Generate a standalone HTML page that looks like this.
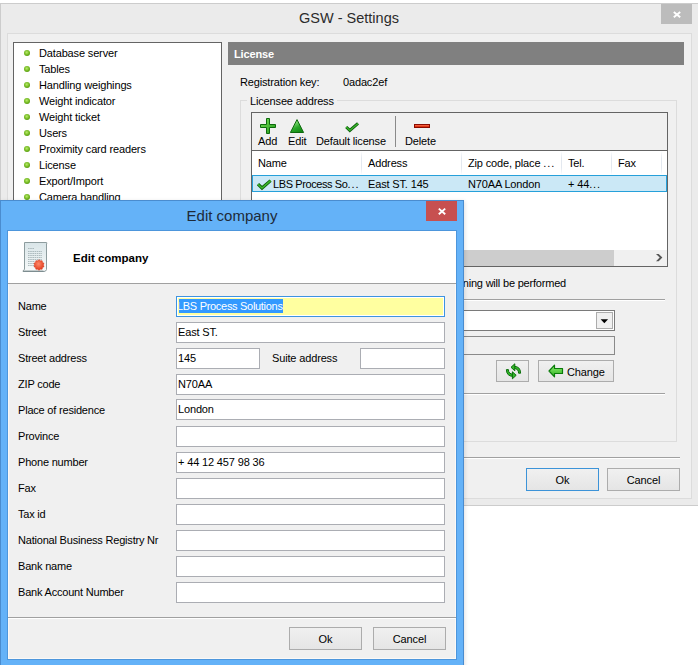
<!DOCTYPE html>
<html><head><meta charset="utf-8">
<style>
*{box-sizing:border-box;margin:0;padding:0}
html,body{width:698px;height:665px;overflow:hidden;background:#fff}
body{position:relative;font-family:"Liberation Sans",sans-serif;font-size:11px;color:#000}
.a{position:absolute}
.t{position:absolute;white-space:nowrap;line-height:11px;letter-spacing:-0.15px}
.btn{position:absolute;border:1px solid #acacac;background:linear-gradient(#f0f0f0,#e5e5e5)}
.fld{position:absolute;border:1px solid #abadb3;background:#fff}
svg{position:absolute;overflow:visible}
</style></head><body>

<div class="a" style="left:0px;top:3px;width:710px;height:503px;background:#ebebeb;border:1px solid #cccccc;border-right:none"></div>
<div class="t" style="left:0;width:698px;text-align:center;top:11px;font-size:14.5px;line-height:15px;letter-spacing:0;color:#2b2b2b">GSW - Settings</div>
<div class="a" style="left:661px;top:4px;width:31px;height:20px;background:#bcbcbc"></div>
<svg style="left:661px;top:4px" width="31" height="20"><path d="M12.8 7.9 L19.2 13.3 M19.2 7.9 L12.8 13.3" stroke="#fff" stroke-width="1.9" fill="none"/></svg>
<div class="a" style="left:7px;top:33px;width:685px;height:466px;background:#f0f0f0;border:1px solid #dcdcdc"></div>
<div class="a" style="left:13px;top:42px;width:209px;height:200px;background:#fff;border:1px solid #646464"></div>
<div class="a" style="left:24px;top:50px;width:6px;height:6px;border-radius:50%;background:radial-gradient(circle at 45% 40%,#b8ec6a,#6cb21a 55%,#3f7f0a)"></div>
<div class="t" style="left:39px;top:48px;">Database server</div>
<div class="a" style="left:24px;top:66px;width:6px;height:6px;border-radius:50%;background:radial-gradient(circle at 45% 40%,#b8ec6a,#6cb21a 55%,#3f7f0a)"></div>
<div class="t" style="left:39px;top:64px;">Tables</div>
<div class="a" style="left:24px;top:82px;width:6px;height:6px;border-radius:50%;background:radial-gradient(circle at 45% 40%,#b8ec6a,#6cb21a 55%,#3f7f0a)"></div>
<div class="t" style="left:39px;top:80px;">Handling weighings</div>
<div class="a" style="left:24px;top:98px;width:6px;height:6px;border-radius:50%;background:radial-gradient(circle at 45% 40%,#b8ec6a,#6cb21a 55%,#3f7f0a)"></div>
<div class="t" style="left:39px;top:96px;">Weight indicator</div>
<div class="a" style="left:24px;top:114px;width:6px;height:6px;border-radius:50%;background:radial-gradient(circle at 45% 40%,#b8ec6a,#6cb21a 55%,#3f7f0a)"></div>
<div class="t" style="left:39px;top:112px;">Weight ticket</div>
<div class="a" style="left:24px;top:130px;width:6px;height:6px;border-radius:50%;background:radial-gradient(circle at 45% 40%,#b8ec6a,#6cb21a 55%,#3f7f0a)"></div>
<div class="t" style="left:39px;top:128px;">Users</div>
<div class="a" style="left:24px;top:146px;width:6px;height:6px;border-radius:50%;background:radial-gradient(circle at 45% 40%,#b8ec6a,#6cb21a 55%,#3f7f0a)"></div>
<div class="t" style="left:39px;top:144px;">Proximity card readers</div>
<div class="a" style="left:24px;top:162px;width:6px;height:6px;border-radius:50%;background:radial-gradient(circle at 45% 40%,#b8ec6a,#6cb21a 55%,#3f7f0a)"></div>
<div class="t" style="left:39px;top:160px;">License</div>
<div class="a" style="left:24px;top:178px;width:6px;height:6px;border-radius:50%;background:radial-gradient(circle at 45% 40%,#b8ec6a,#6cb21a 55%,#3f7f0a)"></div>
<div class="t" style="left:39px;top:176px;">Export/Import</div>
<div class="a" style="left:24px;top:194px;width:6px;height:6px;border-radius:50%;background:radial-gradient(circle at 45% 40%,#b8ec6a,#6cb21a 55%,#3f7f0a)"></div>
<div class="t" style="left:39px;top:192px;">Camera handling</div>
<div class="a" style="left:228px;top:42px;width:456px;height:23px;background:#808080"></div>
<div class="t" style="left:234px;top:49px;font-weight:bold;color:#fff;">License</div>
<div class="t" style="left:240px;top:77px;">Registration key:</div>
<div class="t" style="left:343px;top:77px;">0adac2ef</div>
<div class="a" style="left:240px;top:100px;width:437px;height:342px;border:1px solid #dcdcdc"></div>
<div class="t" style="left:247px;top:96px;background:#f0f0f0;padding:0 3px">Licensee address</div>
<div class="a" style="left:251px;top:112px;width:417px;height:155px;background:#fff;border:1px solid #646464"></div>
<div class="a" style="left:252px;top:113px;width:415px;height:38px;background:#f0f0f0;border-bottom:1px solid #646464"></div>
<svg style="left:260px;top:118px" width="16" height="16"><defs><linearGradient id="pl" x1="0" y1="0" x2="1" y2="1"><stop offset="0" stop-color="#7be05a"/><stop offset="1" stop-color="#1f9a18"/></linearGradient></defs><path d="M6.5 0.5h3v6h6v3h-6v6h-3v-6h-6v-3h6z" fill="url(#pl)" stroke="#0d6a0d" stroke-width="1"/></svg>
<svg style="left:290px;top:119px" width="15" height="15"><defs><linearGradient id="tg" x1="0.3" y1="0.2" x2="0.7" y2="1"><stop offset="0" stop-color="#8be07a"/><stop offset="0.5" stop-color="#2aa82a"/><stop offset="1" stop-color="#138a13"/></linearGradient></defs><path d="M7 0.6L13.6 13.5H0.4z" fill="url(#tg)" stroke="#0d6a0d" stroke-width="1" stroke-linejoin="round"/></svg>
<svg style="left:344px;top:122px" width="16" height="11"><path d="M2.2 5L5.8 8.4L14 1.4" fill="none" stroke="#0b5e0b" stroke-width="3" stroke-linecap="butt"/><path d="M2.2 5L5.8 8.4L14 1.4" fill="none" stroke="#3cb82c" stroke-width="1.3"/></svg>
<div class="a" style="left:414px;top:124px;width:16px;height:4px;background:linear-gradient(#ff7050,#d02000);border:1px solid #8a0a00"></div>
<div class="t" style="left:258px;top:136px;">Add</div>
<div class="t" style="left:288px;top:136px;">Edit</div>
<div class="t" style="left:316px;top:136px;">Default license</div>
<div class="a" style="left:395px;top:116px;width:1px;height:31px;background:#8a8a8a"></div>
<div class="t" style="left:405px;top:136px;">Delete</div>
<div class="a" style="left:361px;top:151px;width:1px;height:24px;background:linear-gradient(#fff,#e3e8ef 30%,#e3e8ef 70%,#fff)"></div>
<div class="a" style="left:461px;top:151px;width:1px;height:24px;background:linear-gradient(#fff,#e3e8ef 30%,#e3e8ef 70%,#fff)"></div>
<div class="a" style="left:561px;top:151px;width:1px;height:24px;background:linear-gradient(#fff,#e3e8ef 30%,#e3e8ef 70%,#fff)"></div>
<div class="a" style="left:611px;top:151px;width:1px;height:24px;background:linear-gradient(#fff,#e3e8ef 30%,#e3e8ef 70%,#fff)"></div>
<div class="a" style="left:661px;top:151px;width:1px;height:24px;background:linear-gradient(#fff,#e3e8ef 30%,#e3e8ef 70%,#fff)"></div>
<div class="t" style="left:258px;top:158px;">Name</div>
<div class="t" style="left:368px;top:158px;">Address</div>
<div class="t" style="left:468px;top:158px;">Zip code, place <span style="letter-spacing:0.9px">...</span></div>
<div class="t" style="left:568px;top:158px;">Tel.</div>
<div class="t" style="left:618px;top:158px;">Fax</div>
<div class="a" style="left:252px;top:175px;width:415px;height:17px;background:#cbe8f6;border:1px solid #26a0da"></div>
<svg style="left:256px;top:179px" width="16" height="11"><path d="M2 5.2L6 9L14.6 1.6" fill="none" stroke="#0b5e0b" stroke-width="3.2" stroke-linecap="butt"/><path d="M2 5.2L6 9L14.6 1.6" fill="none" stroke="#3cb82c" stroke-width="1.5"/></svg>
<div class="t" style="left:273px;top:179px;letter-spacing:-0.4px;">LBS Process So<span style="letter-spacing:0.9px">...</span></div>
<div class="t" style="left:368px;top:179px;">East ST. 145</div>
<div class="t" style="left:468px;top:179px;">N70AA London</div>
<div class="t" style="left:568px;top:179px;">+ 44<span style="letter-spacing:0.9px">...</span></div>
<div class="a" style="left:252px;top:250px;width:415px;height:16px;background:#f0f0f0"></div>
<div class="a" style="left:252px;top:250px;width:362px;height:16px;background:#cdcdcd"></div>
<svg style="left:654px;top:253px" width="10" height="10"><path d="M2 1H4.7L8.4 4.6L4.7 8.2H2L5.7 4.6z" fill="#555"/></svg>
<div class="t" style="left:165px;width:401px;text-align:right;top:278px;letter-spacing:-0.2px">If no license is selected no warning will be performed</div>
<div class="a" style="left:250px;top:299px;width:415px;height:2px;border-top:1px solid #a0a0a0;border-bottom:1px solid #fff"></div>
<div class="a" style="left:250px;top:310px;width:365px;height:21px;background:#fff;border:1px solid #7a7a7a"></div>
<div class="a" style="left:596px;top:312px;width:17px;height:17px;background:#f0f0f0;border:1px solid #acacac"></div>
<svg style="left:599px;top:318px" width="11" height="7"><path d="M1.6 1.2H9.1L5.35 5.3z" fill="#000"/></svg>
<div class="a" style="left:250px;top:336px;width:365px;height:19px;background:#f0f0f0;border:1px solid #8a8a8a"></div>
<div class="btn" style="left:496px;top:360px;width:33px;height:22px"></div>
<svg style="left:503px;top:361px" width="22" height="22"><g stroke="#0b6e0b" stroke-width="1" fill="#34b82a" stroke-linejoin="round">
<path d="M10.5 5.2Q17.6 5.2 17.6 12.2L15.6 12.2Q15.6 7.4 10.5 7.4z"/>
<path d="M8 6.3L11.8 2.8V9.8z"/>
<path d="M10.5 15.4Q3.4 15.4 3.4 8.6L5.4 8.6Q5.4 13.2 10.5 13.2z"/>
<path d="M13.2 14.3L9.4 10.8V17.8z"/></g></svg>
<div class="btn" style="left:538px;top:360px;width:76px;height:22px"></div>
<svg style="left:544px;top:361px" width="22" height="20"><defs><linearGradient id="ag" x1="0" y1="0" x2="0" y2="1"><stop offset="0" stop-color="#8ef070"/><stop offset="1" stop-color="#2fb020"/></linearGradient></defs><path d="M5 10L10.5 4.2V7.5H18.5V12.5H10.5V15.8z" fill="url(#ag)" stroke="#0a7a0a" stroke-width="1.2" stroke-linejoin="round"/></svg>
<div class="t" style="left:567px;top:367px;">Change</div>
<div class="a" style="left:250px;top:393px;width:415px;height:2px;border-top:1px solid #a0a0a0;border-bottom:1px solid #fff"></div>
<div class="a" style="left:230px;top:457px;width:450px;height:2px;border-top:1px solid #a0a0a0;border-bottom:1px solid #fff"></div>
<div class="btn" style="left:526px;top:468px;width:73px;height:23px;border-color:#3c93d8"></div>
<div class="t" style="left:526px;top:475px;width:73px;text-align:center;">Ok</div>
<div class="btn" style="left:607px;top:468px;width:73px;height:23px"></div>
<div class="t" style="left:607px;top:475px;width:73px;text-align:center;">Cancel</div>
<div class="a" style="left:0px;top:200px;width:464px;height:470px;background:#64b2f8;border:1px solid #4a8ccf;box-shadow:1px 1px 4px rgba(0,0,0,0.12)"></div>
<div class="a" style="left:7px;top:230px;width:450px;height:430px;border:1px solid #4d96dc"></div>
<div class="t" style="left:0;width:464px;text-align:center;top:208px;font-size:15px;line-height:15px;letter-spacing:0;color:#1e2a38">Edit company</div>
<div class="a" style="left:426px;top:201px;width:31px;height:20px;background:#c75050"></div>
<svg style="left:426px;top:201px" width="31" height="20"><path d="M12.8 7.6 L19.2 13.3 M19.2 7.6 L12.8 13.3" stroke="#fff" stroke-width="1.9" fill="none"/></svg>
<div class="a" style="left:8px;top:231px;width:448px;height:428px;background:#f0f0f0;border:1px solid #fbf9f7"></div>
<div class="a" style="left:8px;top:231px;width:448px;height:53px;background:#fff;border-bottom:1px solid #a0a0a0"></div>
<svg style="left:22px;top:241px" width="28" height="33">
<defs><linearGradient id="pg" x1="0" y1="0" x2="0" y2="1"><stop offset="0" stop-color="#d9e5e8"/><stop offset="1" stop-color="#f7fafa"/></linearGradient>
<radialGradient id="sg" cx="0.45" cy="0.4" r="0.6"><stop offset="0" stop-color="#ff8a6a"/><stop offset="1" stop-color="#e0381a"/></radialGradient></defs>
<path d="M2.5 1.5H24.5Q25.5 1.5 24.5 3V28.5Q24 30.5 22 30.5H1Q1 29 2.5 28.5z" fill="url(#pg)" stroke="#8d9c9e" stroke-width="1"/>
<path d="M1.2 30.2H21.5" stroke="#7a8a8c" stroke-width="1.2"/>
<g stroke="#a6b4b8" stroke-width="0.9" stroke-dasharray="1.6 0.6">
<path d="M6 7.5H12M6 10.5H20M6 12.5H20M6 14.5H20M6 16.5H20M6 18.5H20M6 20.5H13M6 22.5H13M6 24.5H13"/></g>
<path d="M17.00 18.70 L18.36 19.82 L20.12 19.71 L20.56 21.41 L22.04 22.36 L21.40 24.00 L22.04 25.64 L20.56 26.59 L20.12 28.29 L18.36 28.18 L17.00 29.30 L15.64 28.18 L13.88 28.29 L13.44 26.59 L11.96 25.64 L12.60 24.00 L11.96 22.36 L13.44 21.41 L13.88 19.71 L15.64 19.82z" fill="url(#sg)" stroke="#d83a1c" stroke-width="0.5"/>
</svg>
<div class="t" style="left:73px;top:253px;font-size:11.5px;font-weight:bold;letter-spacing:0;">Edit company</div>
<div class="t" style="left:18px;top:301px;letter-spacing:-0.2px;">Name</div>
<div class="a" style="left:176px;top:296px;width:269px;height:21px;background:#ffffa0;border:1px solid #3d94e0;box-shadow:inset 0 0 0 1px #fff"></div>
<div class="a" style="left:179px;top:299px;width:104px;height:14px;background:#3399ff;overflow:hidden"><div class="t" style="left:-2px;top:2px;color:#fff;letter-spacing:-0.3px">LBS Process Solutions</div></div>
<div class="t" style="left:18px;top:327px;letter-spacing:-0.2px;">Street</div>
<div class="fld" style="left:176px;top:322px;width:269px;height:21px"></div>
<div class="t" style="left:178px;top:327px;">East ST.</div>
<div class="t" style="left:18px;top:353px;letter-spacing:-0.2px;">Street address</div>
<div class="fld" style="left:176px;top:348px;width:84px;height:21px"></div>
<div class="t" style="left:178px;top:353px;">145</div>
<div class="t" style="left:272px;top:353px;">Suite address</div>
<div class="fld" style="left:360px;top:348px;width:85px;height:21px"></div>
<div class="t" style="left:18px;top:379px;letter-spacing:-0.2px;">ZIP code</div>
<div class="fld" style="left:176px;top:374px;width:269px;height:21px"></div>
<div class="t" style="left:178px;top:379px;">N70AA</div>
<div class="t" style="left:18px;top:405px;letter-spacing:-0.2px;">Place of residence</div>
<div class="fld" style="left:176px;top:399px;width:269px;height:21px"></div>
<div class="t" style="left:178px;top:404px;">London</div>
<div class="t" style="left:18px;top:431px;letter-spacing:-0.2px;">Province</div>
<div class="fld" style="left:176px;top:426px;width:269px;height:21px"></div>
<div class="t" style="left:18px;top:457px;letter-spacing:-0.2px;">Phone number</div>
<div class="fld" style="left:176px;top:452px;width:269px;height:21px"></div>
<div class="t" style="left:178px;top:457px;">+ 44 12 457 98 36</div>
<div class="t" style="left:18px;top:483px;letter-spacing:-0.2px;">Fax</div>
<div class="fld" style="left:176px;top:478px;width:269px;height:21px"></div>
<div class="t" style="left:18px;top:509px;letter-spacing:-0.2px;">Tax id</div>
<div class="fld" style="left:176px;top:504px;width:269px;height:21px"></div>
<div class="t" style="left:18px;top:535px;letter-spacing:-0.2px;">National Business Registry Nr</div>
<div class="fld" style="left:176px;top:530px;width:269px;height:21px"></div>
<div class="t" style="left:18px;top:561px;letter-spacing:-0.2px;">Bank name</div>
<div class="fld" style="left:176px;top:556px;width:269px;height:21px"></div>
<div class="t" style="left:18px;top:587px;letter-spacing:-0.2px;">Bank Account Number</div>
<div class="fld" style="left:176px;top:582px;width:269px;height:21px"></div>
<div class="a" style="left:8px;top:617px;width:448px;height:2px;border-top:1px solid #a0a0a0;border-bottom:1px solid #fff"></div>
<div class="btn" style="left:289px;top:627px;width:73px;height:23px"></div>
<div class="t" style="left:289px;top:634px;width:73px;text-align:center;">Ok</div>
<div class="btn" style="left:373px;top:627px;width:73px;height:23px"></div>
<div class="t" style="left:373px;top:634px;width:73px;text-align:center;">Cancel</div>
</body></html>
